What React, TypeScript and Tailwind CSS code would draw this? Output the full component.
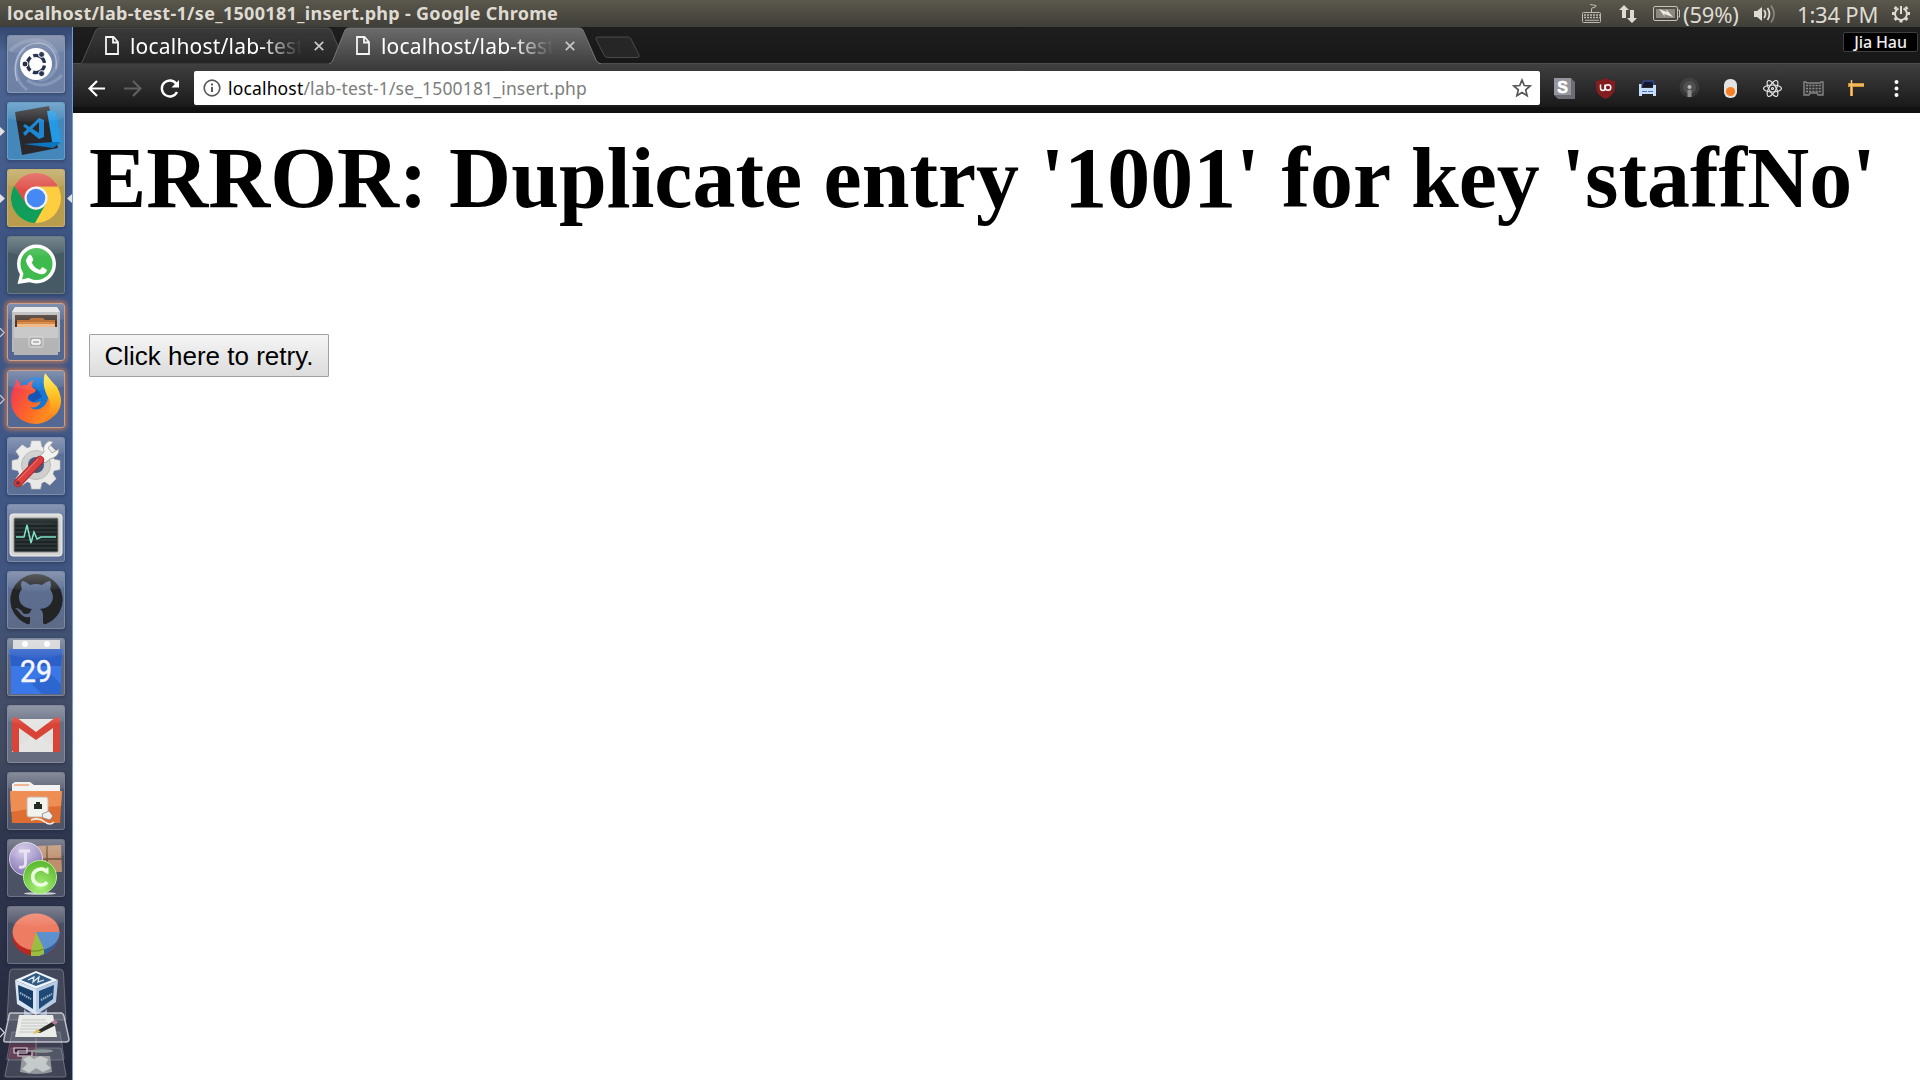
import React from "react";

const UI = "font-['Noto_Sans','Open_Sans',sans-serif]";

type TileProps = {
  tone?: string;
  glow?: boolean;
  left?: "solid" | "open";
  right?: boolean;
  children: React.ReactNode;
};

function Tile({ tone = "bg-white/15", glow, left, right, children }: TileProps) {
  return (
    <div className="flex h-[58px] w-[72px] shrink-0 items-center">
      <svg className="h-[11px] w-[7px] shrink-0" viewBox="0 0 7 11">
        {left === "solid" && <path d="M0 1L5 5.5L0 10Z" fill="#e2e2e2" />}
        {left === "open" && <path d="M0 1.2L4.3 5.5L0 9.8" fill="none" stroke="#d5d8e0" strokeWidth="1.1" />}
      </svg>
      <div
        className={`relative h-[58px] w-[58px] shrink-0 overflow-hidden rounded-[3px] border ${tone} ${
          glow
            ? "border-[#c9a08a] shadow-[0_0_4px_2px_rgba(190,120,85,0.85)]"
            : "border-white/20 shadow-[0_1px_3px_1px_rgba(20,30,60,0.3)]"
        }`}
      >
        <svg className="-m-px block h-[58px] w-[58px]" viewBox="0 0 58 58">
          {children}
          <path d="M0 0H58V16Q29 25 0 16Z" fill="url(#shine)" />
        </svg>
      </div>
      <svg className="h-[11px] w-[7px] shrink-0" viewBox="0 0 7 11">
        {right && <path d="M7 1L2 5.5L7 10Z" fill="#e2e2e2" />}
      </svg>
    </div>
  );
}

const teeth = [0, 45, 90, 135, 180, 225, 270, 315];

function Launcher() {
  return (
    <aside className="flex w-[73px] shrink-0 flex-col gap-[9px] overflow-hidden border-r border-[#6f9be0] bg-[linear-gradient(180deg,#33466f_0px,#4d6592_25px,#445c8b_150px,#3d5482_220px,#405888_400px,#40557f_560px,#434f6a_640px,#414960_730px,#303850_800px,#2b3148_900px,#242839_1053px)] pt-2">
      <Tile tone="bg-white/20">
        <defs>
          <linearGradient id="shine" x1="0" y1="0" x2="0" y2="1">
            <stop offset="0" stopColor="#fff" stopOpacity=".28" />
            <stop offset="1" stopColor="#fff" stopOpacity=".03" />
          </linearGradient>
        </defs>
        <g fill="none" stroke="#d4dcee">
          <path d="M10 46C4 26 14 9 30 8C44 8 51 20 49 34" strokeWidth="1.2" opacity=".6" />
          <path d="M3 16C15 3 40 0 49 18C54 30 45 44 32 45" strokeWidth="4" opacity=".2" />
          <path d="M20 55C4 43 7 22 18 13M20 45C34 55 48 48 55 40" strokeWidth="3" opacity=".25" />
        </g>
        <circle cx="29" cy="29" r="16" fill="#fff" />
        <circle cx="29" cy="29" r="8.6" fill="none" stroke="#27324f" strokeWidth="3.4" strokeDasharray="15 3" strokeDashoffset="-1.5" />
        <g fill="#27324f" stroke="#fff" strokeWidth="1">
          <circle cx="18" cy="29" r="3" />
          <circle cx="34.6" cy="19.4" r="3" />
          <circle cx="34.6" cy="38.6" r="3" />
        </g>
      </Tile>

      <Tile tone="bg-[#4488bb]" left="solid">
        <path d="M8 10L42 4L51 46L15 53Z" fill="#29292d" />
        <path d="M40 9Q46 8 49 11L54 40L46 45Z" fill="#2499e6" />
        <path d="M17 42L46 40L54 40L46 46Z" fill="#0b76bd" />
        <path d="M32 16L37 18V35L32 37L16 24L18 22L32 31V20L18 34L16 31Z" fill="#1d86d1" />
      </Tile>

      <Tile tone="bg-[#b79d4d]" left="solid" right>
        <circle cx="29" cy="29" r="25" fill="#ffcd40" />
        <path d="M29 29L18 35L7.3 16.5A25 25 0 0 1 50.7 16.5L50.7 18H29Z" fill="#df5048" />
        <path d="M7.3 16.5A25 25 0 0 0 28 54L39 34.5L29 41L19 35Z" fill="#119e5a" />
        <path d="M29 18H51.5" stroke="#eac23a" strokeWidth="1" />
        <circle cx="29" cy="29" r="11.5" fill="#f2f3f5" />
        <circle cx="29" cy="29" r="9.3" fill="#4688f4" />
      </Tile>

      <Tile tone="bg-[#455a64]">
        <circle cx="29.500" cy="28" r="19.500" fill="#fff" />
        <path d="M10.500 48L13.500 36L24 46Z" fill="#fff" />
        <circle cx="29.500" cy="28" r="16" fill="#3fbb4d" />
        <path d="M15 43.500L17 35.500L23 41.500Z" fill="#3fbb4d" />
        <path d="M22 19C24 18 25 20 26 23C27 25 24 26 25 27C27 31 30 33 33 34C34 33 35 30 37 32L40 34C39 38 36 39 33 38C26 37 19 30 19 24Q20 21 22 19Z" fill="#fff" />
      </Tile>

      <Tile tone="bg-white/10" left="open" glow>
        <path d="M8 4H50L53 9V49H5V9Z" fill="#b9b9b9" />
        <path d="M8 4H50L53 9H5Z" fill="#e4e4e4" />
        <rect x="8" y="12" width="42" height="14" fill="#4a3a30" />
        <path d="M10 17H22L24 15H36L38 17H48V27H10Z" fill="#b8682c" />
        <path d="M10 19H48V27H10Z" fill="#d78a48" />
        <path d="M10 21H48V27H10Z" fill="#efb98a" />
        <path d="M7 24H51V52H7Z" fill="#b4b4b4" />
        <path d="M7 24H51V35H7Z" fill="#c9c9c9" />
        <rect x="22" y="34" width="14" height="10" rx="2" fill="#aaa" stroke="#ddd" />
        <rect x="25" y="37" width="8" height="4" rx="1" fill="#bbb" stroke="#fff" strokeWidth="1.4" />
      </Tile>

      <Tile tone="bg-white/10" left="open" glow>
        <defs>
          <linearGradient id="fox" x1="0" y1=".3" x2="1" y2=".8">
            <stop offset="0" stopColor="#f23b52" />
            <stop offset=".5" stopColor="#ff6b25" />
            <stop offset="1" stopColor="#ffa51a" />
          </linearGradient>
          <linearGradient id="flame" x1="0" y1="0" x2="0" y2="1">
            <stop offset="0" stopColor="#fff04a" />
            <stop offset=".5" stopColor="#ffbd22" />
            <stop offset="1" stopColor="#ff7a1d" />
          </linearGradient>
        </defs>
        <circle cx="30" cy="26" r="19" fill="#1477d4" />
        <path d="M20 14Q31 17 35 27L26 32L18 26Z" fill="#1754b3" />
        <path d="M9 9Q12 11 14 16Q17 14 20 15Q22 11 27 10Q23 15 26 18L29 20Q28 23 23 24Q20 27 21 30Q28 35 34 31Q31 39 23 37Q30 43 38 35Q44 27 39 18Q48 24 52 27A24 24 0 0 1 30 54C14 54 4 43 4 31Q4 20 8 15Z" fill="url(#fox)" />
        <path d="M38 3Q44 11 50 17Q58 32 50 43Q44 50 36 51Q46 40 42 29Q34 16 38 3Z" fill="url(#flame)" />
      </Tile>

      <Tile>
        <g fill="#e9e9e7" stroke="#c3c3c1" strokeWidth=".6">
          {teeth.map((a) => (
            <path key={a} d="M24.500 4H33.500L35.500 14H22.500Z" transform={`rotate(${a} 29 28)`} />
          ))}
        </g>
        <circle cx="29" cy="28" r="19" fill="#e9e9e7" />
        <circle cx="29" cy="28" r="14.500" fill="#cfcfcd" stroke="#b1b1af" strokeWidth=".8" />
        <circle cx="29" cy="28" r="8" fill="#46577c" />
        <path d="M32 20L37 15Q35 8 42 4L46 5L41 11L45 16L52 12Q52 20 43 22L38 26Z" fill="#f3f3f1" stroke="#91918f" strokeWidth=".8" />
        <path d="M11 46L33 23" stroke="#a92a2a" strokeWidth="8.500" strokeLinecap="round" />
        <path d="M11 46L33 23" stroke="#dc4040" strokeWidth="6.500" strokeLinecap="round" />
        <path d="M11 43L31 22" stroke="#ed8278" strokeWidth="1" />
        <circle cx="11" cy="46" r="2" fill="#79303a" />
      </Tile>

      <Tile>
        <rect x="3" y="10" width="52" height="42" rx="3" fill="#d5d5d3" stroke="#efefed" />
        <rect x="7" y="14" width="44" height="34" rx="1" fill="#1c2426" stroke="#858583" />
        <path d="M8 20H50M8 24H50M8 28H50M8 32H50M8 36H50M8 40H50M8 44H50" stroke="#4c5657" strokeWidth=".7" />
        <path d="M9 33H17L20 21L24 39L27 28L30 35L34 33H49" fill="none" stroke="#7ee2c6" strokeWidth="1.500" />
      </Tile>

      <Tile>
        <path d="M29 3A27 26 0 0 0 20 53Q23 54 23 51V46Q16 47 13 42Q11 39 8 37Q13 37 16 42Q18 44 23 42Q23 40 25 38Q12 36 12 26Q12 21 15 18Q13 14 15 10Q18 10 23 14Q29 12 35 14Q40 10 43 10Q45 14 43 18Q46 22 46 26Q45 37 33 38Q36 40 36 44V51Q36 54 39 53A27 26 0 0 0 29 3Z" fill="#222426" />
      </Tile>

      <Tile>
        <rect x="6" y="2" width="47" height="15" rx="1" fill="#d1d3d4" />
        <circle cx="18" cy="6" r="3" fill="#fff" />
        <circle cx="40" cy="6" r="3" fill="#fff" />
        <path d="M2 11H56Q54 27 54 38V56H4V38Q4 26 2 11Z" fill="#3a78e8" />
        <path d="M2 11H56Q54 22 54 28H4Q4 22 2 11Z" fill="#2d5fc8" />
        <path d="M22 43L44 36L54 46V56H35Z" fill="#2c66cf" />
        <text x="29" y="44" textAnchor="middle" fill="#f4f6fc" stroke="#f4f6fc" strokeWidth=".5" fontFamily="Roboto, sans-serif" fontSize="31" textLength="32" lengthAdjust="spacingAndGlyphs">29</text>
      </Tile>

      <Tile tone="bg-white/20">
        <path d="M5 14H53V47H5Z" fill="#e4e4e3" />
        <path d="M5 47L29 28L53 47Z" fill="#f1f1f0" />
        <path d="M12 19L29 34L46 19V47H12Z" fill="#dededd" opacity=".7" />
        <path d="M5 16Q5 12 9 12L29 27L49 12Q53 12 53 16V47H46V23L29 35L12 23V47H7Q5 47 5 45Z" fill="#d84437" />
      </Tile>

      <Tile>
        <path d="M5 12L8 10H23L27 13H53V26H5Z" fill="#f1f1ef" />
        <path d="M7 13H22" stroke="#ec9667" strokeWidth="1.500" />
        <path d="M3 19H55L53 51H5Z" fill="#de6d31" />
        <path d="M3 19H55L54 34Q29 35 4 40Z" fill="#ef8e53" />
        <rect x="20" y="25" width="21" height="20" rx="2" fill="#f2f2ef" stroke="#c7b5a7" />
        <path d="M27 37V32H29V30H33V32H35V37Z" fill="#262c23" />
        <path d="M24 48Q32 45 38 50Q43 54 47 50" fill="none" stroke="#f5eee6" strokeWidth="1.500" />
        <path d="M35 42L42 39L46 44L43 48L36 46Z" fill="#eee" stroke="#777" strokeWidth=".7" />
      </Tile>

      <Tile>
        <defs>
          <radialGradient id="violet" cx=".4" cy=".3" r=".7">
            <stop offset="0" stopColor="#cfc6e6" />
            <stop offset="1" stopColor="#8577b5" />
          </radialGradient>
          <radialGradient id="lime" cx=".5" cy=".8" r=".8">
            <stop offset="0" stopColor="#a8f07a" />
            <stop offset="1" stopColor="#58b52c" />
          </radialGradient>
        </defs>
        <path d="M28 7L54 6L55 33H34Z" fill="#be8f6d" />
        <path d="M40 7V33M29 20H55" stroke="#70513f" strokeWidth="1.500" />
        <circle cx="19" cy="20" r="16.500" fill="url(#violet)" stroke="#d8d0e8" />
        <path d="M12 12H23M18.500 12V25Q18 29 12 28" fill="none" stroke="#e6e0f4" strokeWidth="3" />
        <ellipse cx="33" cy="54.500" rx="16" ry="1.300" fill="#c8d5d3" />
        <circle cx="33" cy="38" r="16.500" fill="url(#lime)" stroke="#b7ee96" />
        <path d="M40 33A8 8 0 1 0 40 43" fill="none" stroke="#ecffe0" strokeWidth="3.600" />
        <path d="M40.500 28.500V35" stroke="#ecffe0" strokeWidth="2" />
      </Tile>

      <Tile>
        <ellipse cx="29" cy="30" rx="23.500" ry="20" fill="#b92722" />
        <path d="M29 28H52.500Q53 42 36 49.500L25 50Z" fill="#315f98" />
        <ellipse cx="29" cy="26" rx="23.500" ry="18.500" fill="#ee7c62" />
        <path d="M29 26H52.500Q52 39 36 43.700Z" fill="#5d91ce" />
        <path d="M29 26L24 45V50H32L37 48V43Z" fill="#9dbd42" />
        <path d="M24 45Q31 46 37 43" stroke="#678725" fill="none" />
      </Tile>

      <svg className="-mt-[14px] block h-[122px] w-[72px] shrink-0" viewBox="0 0 72 122">
        <path d="M12 10H60Q63 10 63.500 14L66 61H7L9.500 14Q10 10 12 10Z" fill="#fff" fillOpacity=".12" stroke="#fff" strokeOpacity=".25" />
        <path d="M24 50Q36 63 47 50V56Q36 62 24 56Z" fill="#91add1" />
        <path d="M36 12L58 21L36 30L15 21Z" fill="#edf4fb" />
        <path d="M15 21L36 30V56L17 45Z" fill="#d6e4f3" />
        <path d="M36 30L58 21L56 43L36 56Z" fill="#b5cbe3" />
        <path d="M36 14L52 21L36 27L21 21Z" fill="#315b83" />
        <path d="M18 26L33 32V50L19 41Z" fill="#183e68" />
        <path d="M39 32L54 26L53 40L39 50Z" fill="#204a75" />
        <path d="M28 21L34 18L33 23L39 18L38 23L44 21" stroke="#dce9f5" strokeWidth="1.300" fill="none" />
        <path d="M20 34L31 40M41 41L52 35" stroke="#a3b9cd" strokeWidth="2" strokeDasharray="1.500 .8" />
        <path d="M12 73H60L64 99Q64 101 62 101H8Q6 101 7 99Z" fill="#9396a5" fillOpacity=".2" stroke="#81869a" strokeOpacity=".6" />
        <path d="M11 89H61L66 116Q66 118 64 118H7Q4 118 5 116Z" fill="#9ba0ad" fillOpacity=".25" stroke="#a4a8b5" strokeOpacity=".5" />
        <path d="M9 85H36V100H8Z" fill="#783048" fillOpacity=".5" />
        <path d="M36 79V100" stroke="#877684" />
        <path d="M11 54H61Q63 54 64 57L69 80Q69 83 66 83H6Q3 83 4 80L9 57Q9 54 11 54Z" fill="#b7bbc4" fillOpacity=".3" stroke="#e5e7ef" strokeOpacity=".75" strokeWidth="1.500" />
        <path d="M19 56H53L57 78H15Z" fill="#eaece9" />
        <path d="M22 61H46M21 64H48M21 67H47M20 70H43M19 73H38" stroke="#b8bdb8" strokeWidth=".8" />
        <path d="M35 73L52 63L56 66L40 74Z" fill="#292b29" />
        <path d="M33 75L37 70L41 73Z" fill="#ddbf58" />
        <path d="M51 63L55 61L58 63L55 66Z" fill="#b37a98" />
        <path d="M14 89H27V94H14ZM18 92H32V97H18Z" fill="#3c2438" stroke="#d5d2da" strokeWidth="1.200" />
        <path d="M22 97H50L52 113Q37 117 20 113Z" fill="#b1b5b6" fillOpacity=".75" />
        <path d="M23 100L29 97L34 100L40 97L48 100L46 105L51 109L43 113L36 109L29 114L22 110L27 105Z" fill="#d9dedc" opacity=".7" />
        <ellipse cx="42" cy="92" rx="11" ry="1.800" fill="#8d9997" />
        <path d="M0 69L4.300 73.500L0 78" fill="none" stroke="#d5d8e0" strokeWidth="1.200" />
      </svg>
    </aside>
  );
}

function TopBar() {
  return (
    <header className={`flex h-[27px] shrink-0 items-center bg-gradient-to-b from-[#5b584d] to-[#3f3e38] text-[#dfdbd2] ${UI}`}>
      <div className="ml-[7px] flex-1 whitespace-nowrap text-[18px] font-bold leading-[27px] tracking-[0.3px]">
        localhost/lab-test-1/se_1500181_insert.php - Google Chrome
      </div>
      <svg className="h-[27px] w-[65px]" viewBox="1580 0 65 27" fill="none" stroke="#bdbab1">
        <rect x="1582.500" y="12.500" width="18" height="10" rx="1" />
        <path d="M1584 15H1600M1584 17.500H1600" strokeDasharray="2 1" strokeWidth="1.500" />
        <path d="M1585 20.300H1599M1591.500 12V9Q1591.500 7.500 1594 7.500Q1596 7.500 1596 5.500L1590 4.500" />
        <path d="M1624 5L1629 10H1626V18H1622V10H1619ZM1632 23L1627 18H1630V10H1634V18H1637Z" fill="#dfdbd2" stroke="none" />
      </svg>
      <svg className="ml-2 h-[27px] w-[28px]" viewBox="1653 0 28 27" fill="none" stroke="#c5c2b9">
        <rect x="1653.500" y="6.500" width="24" height="14" rx="1.500" />
        <path d="M1678 10H1679.500V17H1678" />
        <rect x="1656" y="9" width="19" height="9" fill="#8b8980" stroke="none" />
        <path d="M1659 9L1667 12L1666 9L1673 17L1664 14L1665 17Z" fill="#eeeae0" stroke="none" />
      </svg>
      <span className="ml-[2px] w-[57px] whitespace-nowrap text-[22px] leading-[26px] tracking-[-0.2px]">(59%)</span>
      <svg className="ml-[13px] h-[27px] w-[24px]" viewBox="1753 0 24 27" fill="none" stroke="#dfdbd2" strokeWidth="1.800">
        <path d="M1754 11H1757L1762 7V21L1757 17H1754Z" fill="#dfdbd2" stroke="none" />
        <path d="M1764 10Q1767 14 1764 18" />
        <path d="M1767.500 8Q1771.500 14 1767.500 20" />
        <path d="M1771 5.500Q1777 14 1771 22.500" opacity=".4" />
      </svg>
      <span className="ml-[20px] w-[81px] whitespace-nowrap text-[22px] leading-[26px] tracking-[-0.2px]">1:34 PM</span>
      <svg className="ml-[13px] mr-[9px] h-[27px] w-[20px]" viewBox="0 0 20 27" fill="none" stroke="#dfdbd2">
        <path d="M7.500 8.500A6 6 0 1 0 12.500 8.500M10 6V14" strokeWidth="2" />
        {[45, 90, 135, 180, 225, 270, 315].map((a) => (
          <path key={a} d="M10 4.500V7" strokeWidth="3" transform={`rotate(${a} 10 13.500)`} />
        ))}
      </svg>
    </header>
  );
}

function TabLabel() {
  return (
    <>
      <svg className="h-[19px] w-[14px] shrink-0" viewBox="0 0 14 19" fill="none" stroke="#f3f3f3" strokeWidth="1.800">
        <path d="M1 1H8.500L13 6V18H1ZM8 1V6.500H13" />
      </svg>
      <span className="ml-[11px] w-[172px] overflow-hidden whitespace-nowrap text-[21px] leading-[30px] tracking-[0.2px] text-white [mask-image:linear-gradient(90deg,#000_76%,transparent_100%)]">
        localhost/lab-test
      </span>
      <svg className="ml-[12px] h-[10px] w-[10px] shrink-0" viewBox="0 0 10 10" stroke="#c9c9c9" strokeWidth="1.700">
        <path d="M.8.8L9.200 9.200M9.200.8L.8 9.200" />
      </svg>
    </>
  );
}

function TabStrip() {
  return (
    <div className={`relative h-[37px] shrink-0 bg-gradient-to-b from-[#1e1e1e] to-[#171717] ${UI}`}>
      <svg className="absolute left-0 top-0 h-[37px] w-full" viewBox="73 27 1847 37" preserveAspectRatio="none">
        <defs>
          <linearGradient id="tabOn" x1="0" y1="0" x2="0" y2="1">
            <stop offset="0" stopColor="#6b6b6b" />
            <stop offset="1" stopColor="#404040" />
          </linearGradient>
          <linearGradient id="tabOff" x1="0" y1="0" x2="0" y2="1">
            <stop offset="0" stopColor="#3a3a3a" />
            <stop offset="1" stopColor="#232323" />
          </linearGradient>
        </defs>
        <path d="M73 63.500H1920" stroke="#4d4d4d" />
        <path d="M80 64Q82 63 83 60L96 30Q97 28 100 28H327Q330 28 331 30L344 60Q345 63 348 64Z" fill="url(#tabOff)" stroke="#505050" />
        <path d="M329 64Q332 63 333 60L345 30Q346 28 349 28H579Q582 28 583 30L596 60Q597 63 601 64Z" fill="url(#tabOn)" />
        <path d="M329 64Q332 63 333 60L345 30Q346 28 349 28H579Q582 28 583 30L596 60Q597 63 601 64" fill="none" stroke="#777" />
        <path d="M599 37H628Q630 37 631 39L639 55Q640 57.500 637 57.500H608Q605 57.500 604 55L596 39Q595 37 599 37Z" fill="#262626" stroke="#4b4b4b" />
      </svg>
      <div className="relative flex h-[37px] items-center">
        <div className="ml-[32px] flex w-[251px] shrink-0 items-center">
          <TabLabel />
        </div>
        <div className="flex w-[250px] shrink-0 items-center">
          <TabLabel />
        </div>
        <div className="mb-[-1px] ml-auto mr-[2px] mt-[-9px] flex h-[20px] w-[75px] items-center justify-center rounded-[2px] border border-[#3f3f3f] bg-black text-[16px] font-medium leading-[18px] tracking-[-0.1px] text-[#eee]">
          Jia Hau
        </div>
      </div>
    </div>
  );
}

function Toolbar() {
  return (
    <div className={`flex h-[49px] shrink-0 items-start border-b-[6px] border-[#111] bg-gradient-to-b from-[#404040] to-[#1a1a1a] pt-[7px] ${UI}`}>
      <svg className="h-[35px] w-[120px] shrink-0" viewBox="73 71 120 35" fill="none" strokeWidth="2.200">
        <path d="M105 88.500H90M97 81L89.500 88.500L97 96" stroke="#fff" />
        <path d="M124 88.500H140M133 81L140.500 88.500L133 96" stroke="#606060" />
        <path d="M176.500 84A8 8 0 1 0 177 92" stroke="#fff" strokeWidth="2.400" />
        <path d="M179 80V87.500H171.500Z" fill="#fff" />
      </svg>
      <div className="ml-px flex h-[34px] w-[1346px] shrink-0 items-center rounded-[2px] bg-white pl-[9px]">
        <svg className="h-[18px] w-[18px]" viewBox="0 0 18 18" fill="none" stroke="#5a5a5a">
          <circle cx="9" cy="9" r="7.800" strokeWidth="1.700" />
          <path d="M9 8V13M9 4.500V6.500" strokeWidth="2" />
        </svg>
        <span className="ml-[7px] flex-1 whitespace-nowrap text-[17.5px] tracking-[0.16px] text-[#7d7d7d]">
          <span className="text-black">localhost</span>/lab-test-1/se_1500181_insert.php
        </span>
        <svg className="mr-[8px] h-[20px] w-[20px]" viewBox="0 0 20 20" fill="none" stroke="#555" strokeWidth="1.700">
          <path d="M10 2L12.300 7.500L18.200 8L13.700 11.900L15.100 17.700L10 14.600L4.900 17.700L6.300 11.900L1.800 8L7.700 7.500Z" />
        </svg>
      </div>
      <svg className="h-[35px] flex-1" viewBox="1540 71 380 35" preserveAspectRatio="xMinYMin meet">
        <path d="M1554 78H1571L1575 82V99H1558L1554 95Z" fill="#6c6d74" />
        <path d="M1554 78H1571V95H1554Z" fill="#96979e" />
        <text x="1562.500" y="92.500" textAnchor="middle" fill="#fff" stroke="#fff" strokeWidth=".6" fontFamily="Liberation Sans, sans-serif" fontWeight="bold" fontSize="16">S</text>
        <path d="M1605.500 78Q1611 81 1615 81V87Q1615 95 1605.500 99Q1596 95 1596 87V81Q1601 81 1605.500 78Z" fill="#841d20" />
        <path d="M1600.500 84.500V88Q1600.500 90.500 1603 90.500Q1605 90.500 1605 88V84.500" fill="none" stroke="#fff" strokeWidth="1.500" />
        <circle cx="1608" cy="87.500" r="2.800" fill="none" stroke="#fff" strokeWidth="1.500" />
        <path d="M1641 87L1644 81H1653L1655 87" fill="#15182a" stroke="#34498e" strokeWidth="1.500" />
        <path d="M1639 84H1641.500V88H1653V85H1656V96H1653V94H1642V96H1639Z" fill="#c5dcfa" />
        <path d="M1642 91.500H1654" stroke="#5070af" strokeDasharray="5 1" />
        <g fill="#777">
          <circle cx="1689.500" cy="87.500" r="10" opacity=".22" />
          <circle cx="1689.500" cy="87.500" r="6.500" opacity=".35" />
        </g>
        <circle cx="1689.500" cy="87" r="2" fill="#bbb" />
        <path d="M1687.500 90H1691.500V97H1687.500Z" fill="#8d8d8d" />
        <rect x="1724" y="79" width="13" height="19" rx="6" fill="#e3e3e1" />
        <circle cx="1730.500" cy="91.500" r="4.600" fill="#f58024" />
        <g fill="none" stroke="#e5e5e5" strokeWidth="1.200">
          {[30, 90, 150].map((a) => (
            <ellipse key={a} cx="1772.500" cy="88.500" rx="9" ry="3.500" transform={`rotate(${a - 30} 1772.500 88.500)`} />
          ))}
          <circle cx="1772.500" cy="88.500" r="1" />
        </g>
        <path d="M1804 82H1806L1807 83H1820L1821 82H1823V95H1818L1817 93H1810L1809 95H1804Z" fill="#343434" stroke="#858585" strokeWidth="1.400" />
        <path d="M1806 85.500H1821M1806 88.500H1821M1806 91.500H1821" stroke="#8d8d8d" strokeWidth="1.600" strokeDasharray="2 1.200" />
        <path d="M1848 83H1864V87H1853V96H1850V87H1848Z" fill="#d39232" />
        <path d="M1849 85H1864M1851.500 80V96" stroke="#f7c475" strokeWidth="1.500" />
        <g fill="#fff">
          <circle cx="1896.500" cy="82" r="2" />
          <circle cx="1896.500" cy="88.500" r="2" />
          <circle cx="1896.500" cy="95" r="2" />
        </g>
      </svg>
    </div>
  );
}

export default function App() {
  return (
    <div className="flex h-[1080px] w-[1920px] flex-col overflow-hidden bg-white">
      <TopBar />
      <div className="flex min-h-0 flex-1">
        <Launcher />
        <div className="flex min-w-0 flex-1 flex-col">
          <TabStrip />
          <Toolbar />
          <main className="flex flex-1 flex-col items-start bg-white pl-4 text-black">
            <h1 className="mt-[17px] h-[96px] whitespace-nowrap font-['Liberation_Serif',serif] text-[85.86px] font-bold leading-[96px]">
              ERROR: Duplicate entry '1001' for key 'staffNo'
            </h1>
            <button className="mt-[108px] h-[43px] w-[240px] whitespace-nowrap rounded-[1px] border border-[#a0a0a0] bg-gradient-to-b from-[#f5f5f5] to-[#dcdcdc] font-['Liberation_Sans',sans-serif] text-[26px] leading-none">
              Click here to retry.
            </button>
          </main>
        </div>
      </div>
    </div>
  );
}
